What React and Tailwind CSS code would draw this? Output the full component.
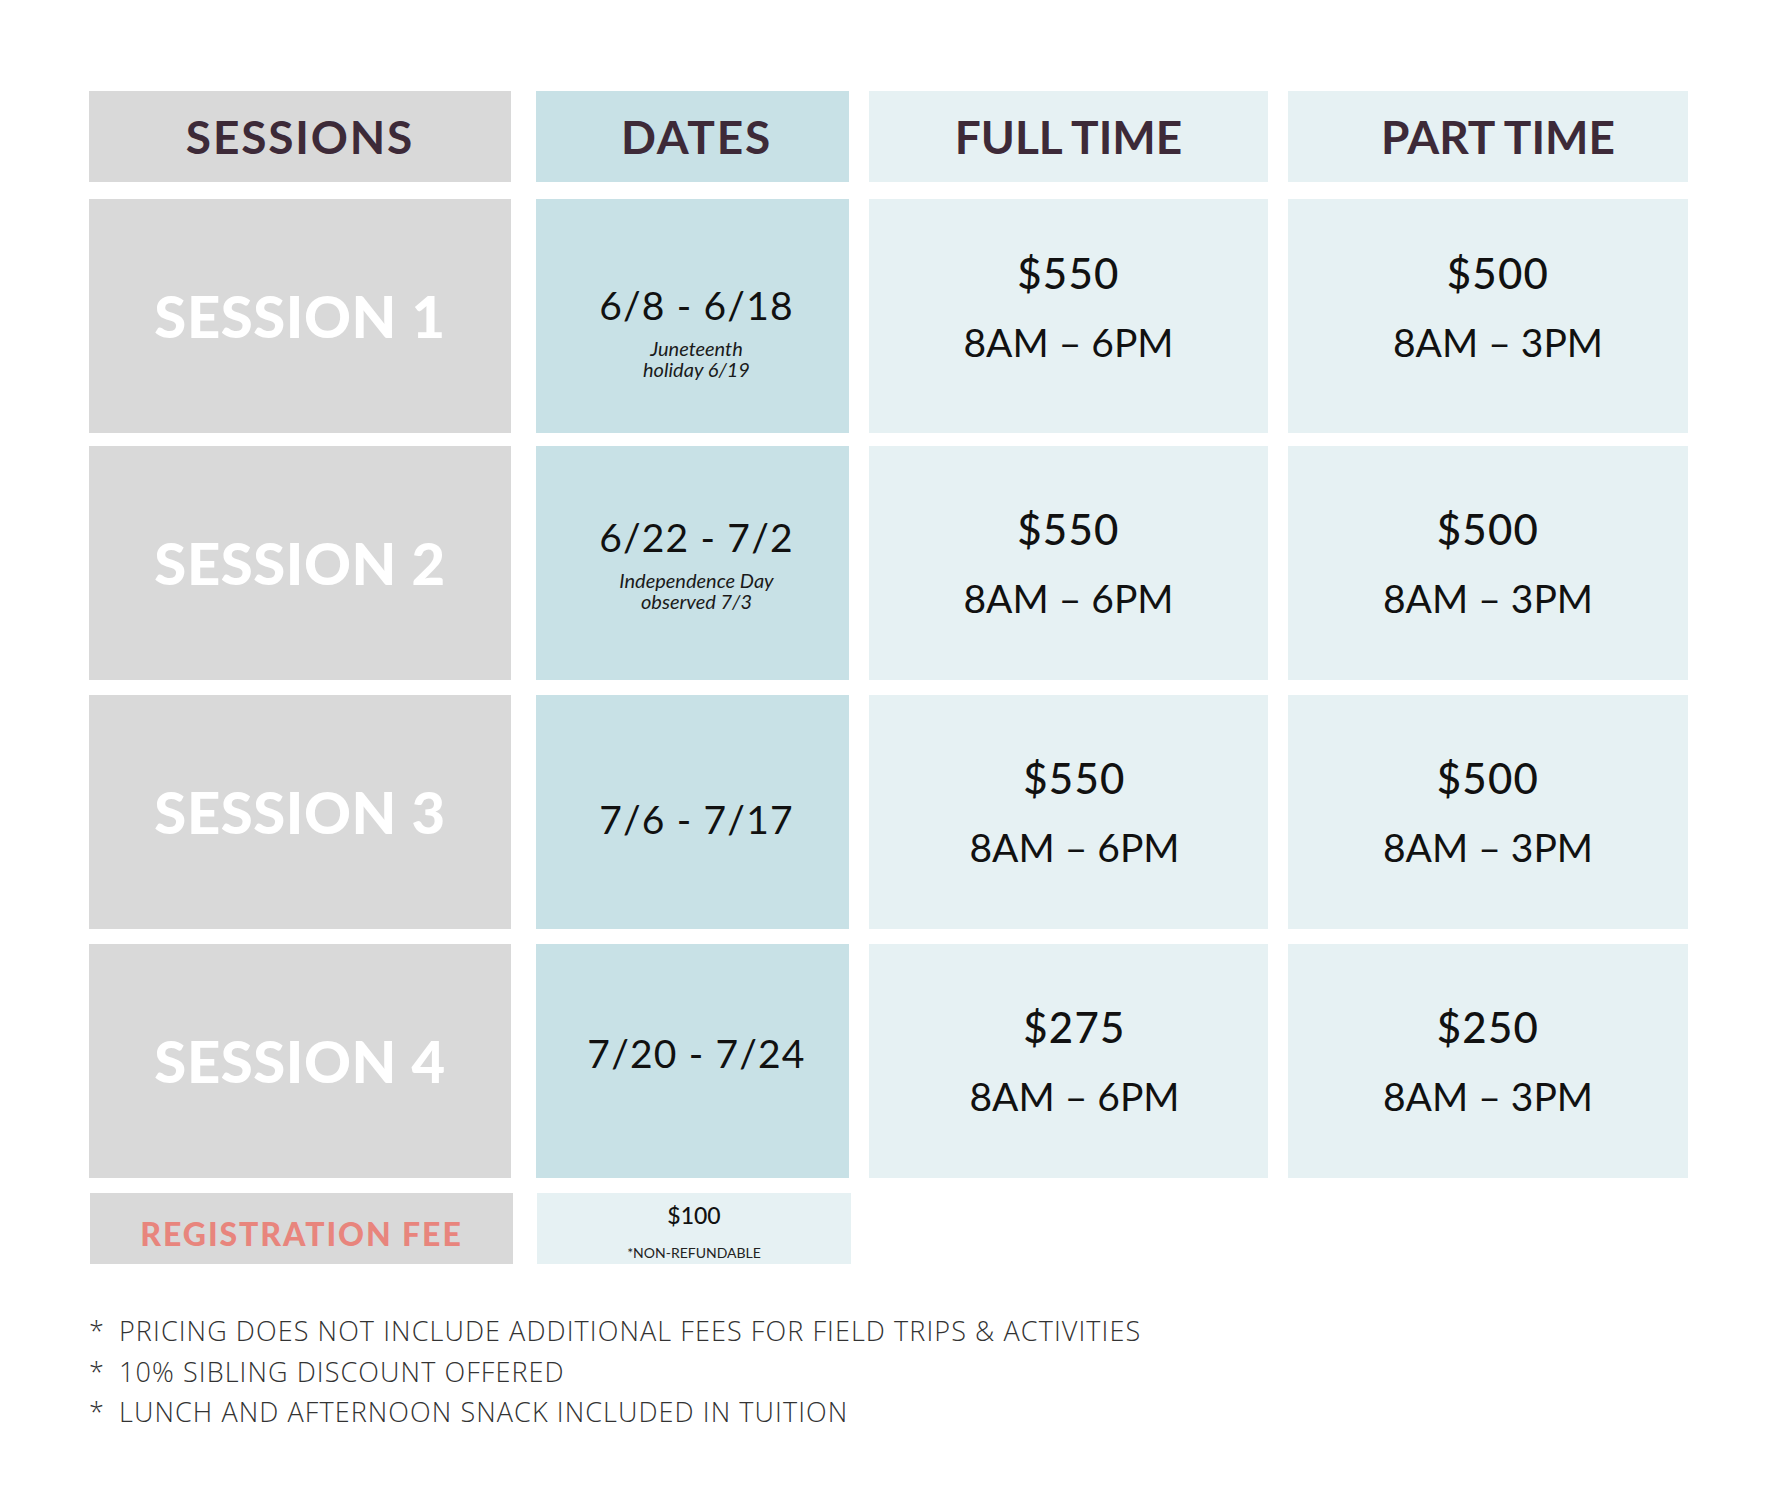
import React from "react";

const rows = [
  {
    label: "SESSION 1",
    date: "6/8 - 6/18",
    sub: ["Juneteenth", "holiday 6/19"],
    dateCls: "pt-[31px]",
    full: "$550",
    fullTime: "8AM – 6PM",
    fullCls: "pb-[18px]",
    part: "$500",
    partTime: "8AM – 3PM",
    partCls: "pb-[18px] pl-[20px]",
  },
  {
    label: "SESSION 2",
    date: "6/22 - 7/2",
    sub: ["Independence Day", "observed 7/3"],
    dateCls: "pt-[2px]",
    full: "$550",
    fullTime: "8AM – 6PM",
    fullCls: "",
    part: "$500",
    partTime: "8AM – 3PM",
    partCls: "",
  },
  {
    label: "SESSION 3",
    date: "7/6 - 7/17",
    sub: null,
    dateCls: "pt-[14px]",
    full: "$550",
    fullTime: "8AM – 6PM",
    fullCls: "pl-[12px]",
    part: "$500",
    partTime: "8AM – 3PM",
    partCls: "",
  },
  {
    label: "SESSION 4",
    date: "7/20 - 7/24",
    sub: null,
    dateCls: "pb-[16px]",
    full: "$275",
    fullTime: "8AM – 6PM",
    fullCls: "pl-[12px]",
    part: "$250",
    partTime: "8AM – 3PM",
    partCls: "",
  },
];

function PriceCell({ price, time, cls }) {
  return (
    <div className={`bg-[#e6f1f3] flex flex-col items-center justify-center ${cls}`}>
      <div className="text-[42px] leading-[48px] font-medium text-[#111] tracking-[0.03em]">{price}</div>
      <div className="mt-[21px] text-[39px] leading-[48px] font-normal text-[#111]">{time}</div>
    </div>
  );
}

export default function App() {
  return (
    <div className="w-[1791px] min-h-[1500px] bg-white font-[Lato,sans-serif]">
      <div className="pl-[89px] pt-[91px]">
        <div className="grid grid-cols-[422px_313px_399px_400px] grid-rows-[91px_234px_234px_234px_234px_71px] gap-y-[15px]">
          {/* Header */}
          <div className="bg-[#d9d9d9] flex items-center justify-center">
            <span className="text-[46px] font-bold tracking-[0.04em] text-[#3d2a38] leading-none">SESSIONS</span>
          </div>
          <div className="bg-[#c8e1e6] flex items-center justify-center ml-[25px] w-[313px] pl-[8px]">
            <span className="text-[46px] font-bold tracking-[0.04em] text-[#3d2a38] leading-none">DATES</span>
          </div>
          <div className="bg-[#e6f1f3] flex items-center justify-center ml-[45px] w-[399px]">
            <span className="text-[46px] font-bold tracking-[0em] text-[#3d2a38] leading-none">FULL TIME</span>
          </div>
          <div className="bg-[#e6f1f3] flex items-center justify-center ml-[65px] w-[400px] pl-[20px]">
            <span className="text-[46px] font-bold tracking-[0em] text-[#3d2a38] leading-none">PART TIME</span>
          </div>

          {rows.map((r, i) => (
            <React.Fragment key={i}>
              <div className={`bg-[#d9d9d9] flex items-center justify-center ${i === 0 ? "mt-[2px] -mb-[2px]" : ""}`}>
                <span className="text-[58px] font-black text-white leading-none tracking-[0.01em]">{r.label}</span>
              </div>
              <div className={`bg-[#c8e1e6] ml-[25px] w-[313px] pl-[8px] flex flex-col items-center justify-center ${i === 0 ? "mt-[2px] -mb-[2px]" : ""}`}>
                <div className={`flex flex-col items-center ${r.dateCls}`}>
                  <div className="text-[39px] leading-[43px] font-normal text-[#111] tracking-[0.03em]">{r.date}</div>
                  {r.sub && (
                    <div className="mt-[11px] text-[20px] leading-[21px] italic font-normal text-[#1a1a1a] text-center">
                      <div>{r.sub[0]}</div>
                      <div>{r.sub[1]}</div>
                    </div>
                  )}
                </div>
              </div>
              <div className={`ml-[45px] w-[399px] grid ${i === 0 ? "mt-[2px] -mb-[2px]" : ""}`}>
                <PriceCell price={r.full} time={r.fullTime} cls={r.fullCls} />
              </div>
              <div className={`ml-[65px] w-[400px] grid ${i === 0 ? "mt-[2px] -mb-[2px]" : ""}`}>
                <PriceCell price={r.part} time={r.partTime} cls={r.partCls} />
              </div>
            </React.Fragment>
          ))}

          {/* Registration fee */}
          <div className="bg-[#d9d9d9] ml-[1px] w-[423px] flex items-center justify-center pt-[11px]">
            <span className="text-[32px] font-black text-[#e8857d] leading-none tracking-[0.06em]">REGISTRATION FEE</span>
          </div>
          <div className="bg-[#e6f1f3] ml-[26px] w-[314px] flex flex-col items-center justify-center pt-[6px]">
            <div className="text-[23px] leading-[24px] font-medium text-[#111]">$100</div>
            <div className="mt-[18px] text-[14px] leading-[16px] text-[#222]">*NON-REFUNDABLE</div>
          </div>
          <div />
          <div />
        </div>

        <div className="mt-[47px] font-['Open_Sans',sans-serif] font-light text-[27px] leading-[40.5px] text-[#333] tracking-[0.04em]">
          <div className="flex"><span className="w-[30px]">*</span><span>PRICING DOES NOT INCLUDE ADDITIONAL FEES FOR FIELD TRIPS &amp; ACTIVITIES</span></div>
          <div className="flex"><span className="w-[30px]">*</span><span>10% SIBLING DISCOUNT OFFERED</span></div>
          <div className="flex"><span className="w-[30px]">*</span><span>LUNCH AND AFTERNOON SNACK INCLUDED IN TUITION</span></div>
        </div>
      </div>
    </div>
  );
}
